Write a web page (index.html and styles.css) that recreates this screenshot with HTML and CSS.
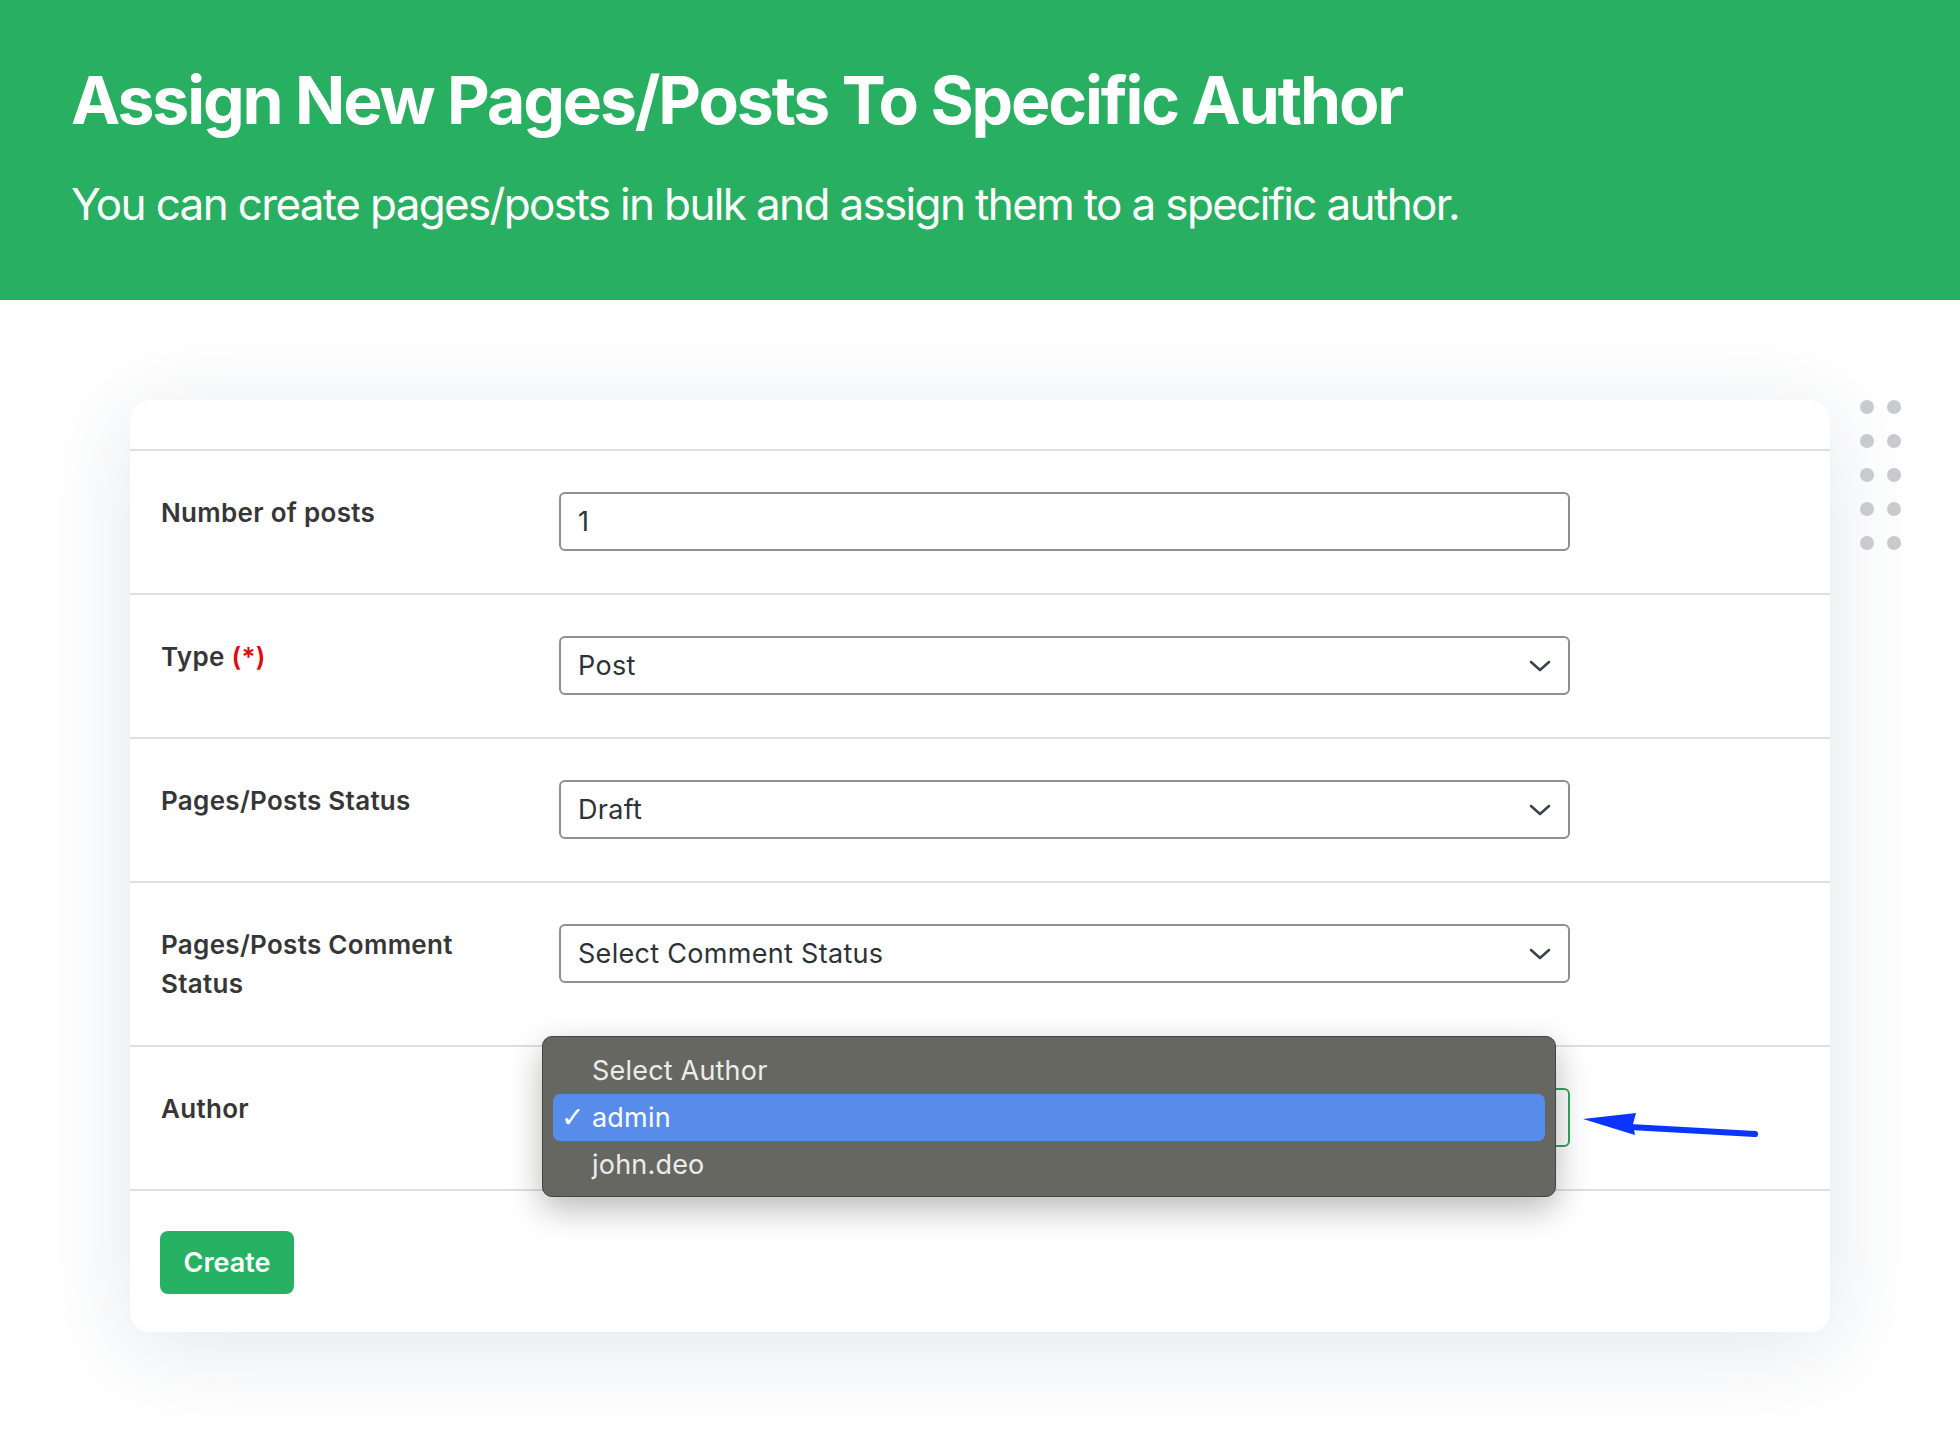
FILE: index.html
```html
<!DOCTYPE html>
<html lang="en">
<head>
<meta charset="utf-8">
<title>Assign New Pages/Posts To Specific Author</title>
<link rel="stylesheet" href="styles.css">
</head>
<body>
<header class="hero">
  <h1 class="hero-title">Assign New Pages/Posts To Specific Author</h1>
  <p class="hero-sub">You can create pages/posts in bulk and assign them to a specific author.</p>
</header>
<main class="stage">
  <div class="dots">
    <span></span><span></span><span></span><span></span><span></span>
    <span></span><span></span><span></span><span></span><span></span>
  </div>
  <section class="card">
    <div class="card-head"></div>
    <div class="row">
      <div class="label">Number of posts</div>
      <div class="field"><span class="value">1</span></div>
    </div>
    <div class="row">
      <div class="label">Type <span class="req">(*)</span></div>
      <div class="field select"><span class="value">Post</span>
        <svg class="chev" viewBox="0 0 22 12"><path d="M2 2 L11 10 L20 2"/></svg></div>
    </div>
    <div class="row">
      <div class="label">Pages/Posts Status</div>
      <div class="field select"><span class="value">Draft</span>
        <svg class="chev" viewBox="0 0 22 12"><path d="M2 2 L11 10 L20 2"/></svg></div>
    </div>
    <div class="row">
      <div class="label">Pages/Posts Comment<br>Status</div>
      <div class="field select"><span class="value">Select Comment Status</span>
        <svg class="chev" viewBox="0 0 22 12"><path d="M2 2 L11 10 L20 2"/></svg></div>
    </div>
    <div class="row author-row">
      <div class="label">Author</div>
      <div class="field select focus"></div>
      <ul class="menu">
        <li class="opt">Select Author</li>
        <li class="opt sel"><span class="check">✓</span><span>admin</span></li>
        <li class="opt">john.deo</li>
      </ul>
      <svg class="arrow" viewBox="0 0 190 40" width="190" height="40">
        <path d="M8 14 L61 8 L58 19 L60 30 Z" fill="#0a34ff"/>
        <path d="M55 22 L180 29" stroke="#0a34ff" stroke-width="6" stroke-linecap="round" fill="none"/>
      </svg>
    </div>
    <div class="actions">
      <button class="btn" type="button">Create</button>
    </div>
  </section>
</main>
</body>
</html>
```
FILE: styles.css
```css
* { box-sizing: border-box; }
html, body { margin: 0; padding: 0; background: #ffffff; }
body { font-family: Inter, "Noto Sans", "Liberation Sans", sans-serif; color: #2c3338; }

.hero {
  background: #28af61;
  height: 300px;
  padding: 61px 0 0 71px;
  color: #ffffff;
}
.hero-title {
  margin: 0;
  font-size: 66px;
  line-height: 1.2;
  font-weight: 700;
  letter-spacing: -2.1px;
}
.hero-sub {
  margin: 38px 0 0;
  font-size: 44px;
  line-height: 1.2;
  font-weight: 400;
  letter-spacing: -1.65px;
}

.stage {
  position: relative;
  padding: 100px 130px 100px;
}
.dots {
  position: absolute;
  left: 1860px;
  top: 100px;
  display: grid;
  grid-template-columns: 14px 14px;
  column-gap: 13px;
  row-gap: 20px;
}
.dots span {
  width: 14px; height: 14px;
  border-radius: 50%;
  background: #c9cacd;
}

.card {
  width: 1700px;
  background: #ffffff;
  border-radius: 20px;
  box-shadow: 0 16px 90px rgba(40, 60, 90, 0.13);
}
.card-head { height: 49px; }

.row {
  position: relative;
  display: flex;
  align-items: flex-start;
  border-top: 2px solid #dfdfe1;
  padding: 41px 31px 42px;
}
.label {
  width: 398px;
  flex: none;
  font-size: 26px;
  line-height: 39px;
  font-weight: 600;
  letter-spacing: 0.3px;
  color: #363636;
  padding-top: 1px;
}
.req { color: #e00b0b; }

.field {
  width: 1011px;
  height: 59px;
  border: 2px solid #8c8f94;
  border-radius: 6px;
  display: flex;
  align-items: center;
  padding: 0 17px 0 17px;
  font-size: 27px;
  letter-spacing: 0.3px;
  color: #2c3338;
  background: #fff;
}
.field .value { flex: 1; }
.chev { width: 22px; height: 12px; }
.chev path { fill: none; stroke: #3c434a; stroke-width: 2.6; stroke-linecap: round; stroke-linejoin: round; }
.field.focus { border-color: #2fa85c; }

.menu {
  position: absolute;
  left: 412px;
  top: -11px;
  width: 1014px;
  margin: 0;
  padding: 10px 10px 8px;
  list-style: none;
  background: #676761;
  border: 1.5px solid #434340;
  border-radius: 10px;
  box-shadow: 0 12px 34px rgba(0, 0, 0, 0.28);
}
.opt {
  height: 47px;
  display: flex;
  align-items: center;
  padding-left: 39px;
  font-size: 27px;
  letter-spacing: 0.2px;
  color: #ececec;
  border-radius: 7px;
}
.opt.sel { background: #578cea; color: #ffffff; padding-left: 8px; }
.check {
  display: inline-block;
  width: 31px;
  font-size: 28px;
  font-weight: 700;
  font-family: "DejaVu Sans", sans-serif;
}
.arrow {
  position: absolute;
  left: 1445px;
  top: 58px;
}

.actions {
  border-top: 2px solid #dfdfe1;
  padding: 40px 30px 38px;
}
.btn {
  width: 134px;
  height: 63px;
  border: 0;
  border-radius: 8px;
  background: #27b163;
  color: #ffffff;
  font-family: Inter, "Noto Sans", sans-serif;
  font-size: 27px;
  font-weight: 600;
  padding: 0;
}
```
